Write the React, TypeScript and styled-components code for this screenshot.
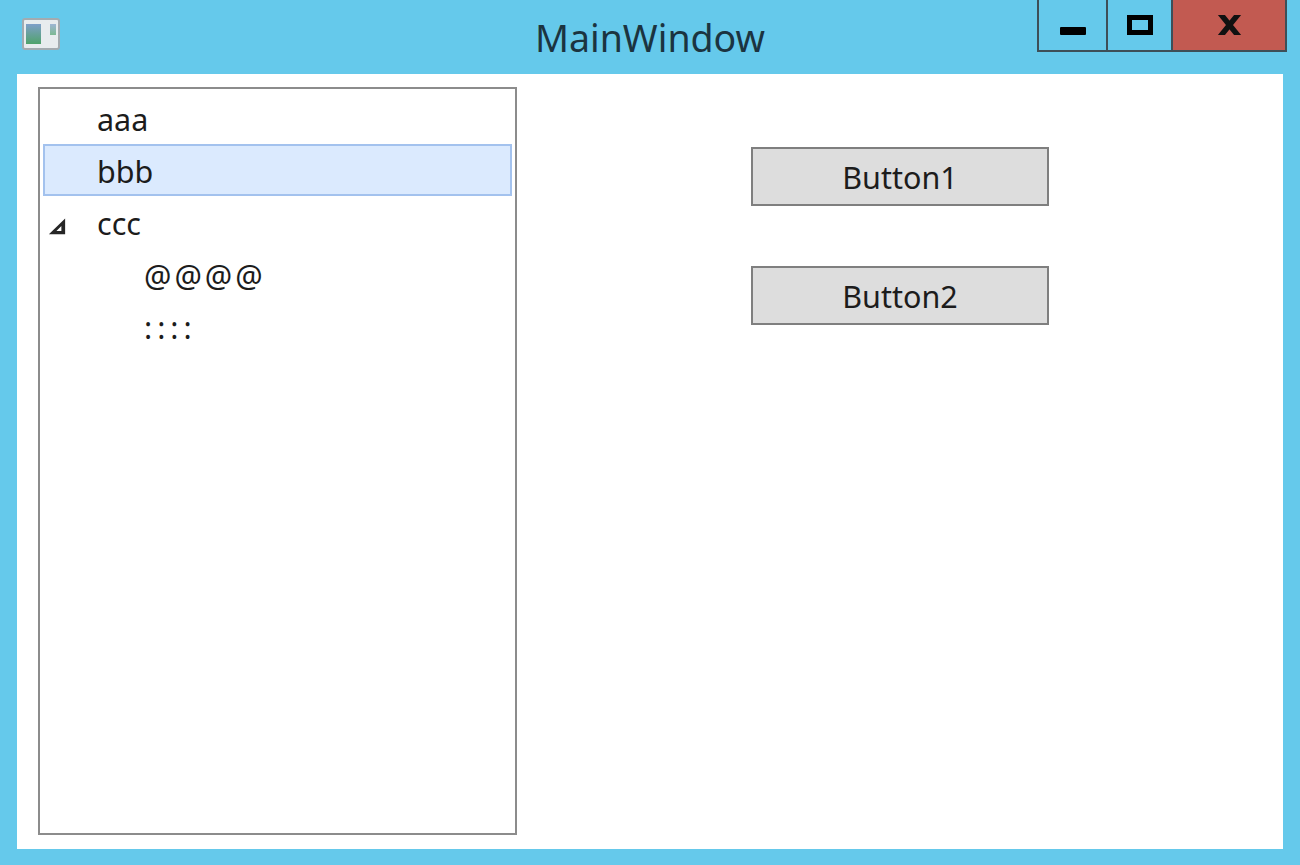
import styled, { createGlobalStyle } from 'styled-components';

const GlobalStyle = createGlobalStyle`
  html, body {
    margin: 0;
    padding: 0;
    height: 100%;
    background: #65c9eb;
  }
`;

const Frame = styled.div`
  width: 1300px;
  height: 865px;
  box-sizing: border-box;
  display: flex;
  flex-direction: column;
  padding: 0 17px 16px;
  background: #65c9eb;
  font-family: 'Noto Sans', 'Open Sans', sans-serif;
  color: #1c1c1c;
  overflow: hidden;
`;

const TitleBar = styled.div`
  height: 74px;
  flex-shrink: 0;
  display: grid;
  grid-template-columns: 1fr auto 1fr;
  align-items: start;
`;

const AppIcon = styled.svg`
  display: block;
  margin: 18px 0 0 5px;
`;

const Title = styled.div`
  font-size: 37.5px;
  line-height: 40px;
  margin-top: 18px;
  color: #1b3440;
`;

const CaptionButtons = styled.div`
  justify-self: end;
  display: flex;
  height: 52px;
  margin-right: -4px;
  box-sizing: border-box;
  border: solid #3d4f58;
  border-width: 0 2px 2px 2px;
`;

const CaptionButton = styled.div<{ $width: number; $close?: boolean }>`
  width: ${({ $width }) => $width}px;
  display: flex;
  align-items: center;
  justify-content: center;
  box-sizing: border-box;
  background: ${({ $close }) => ($close ? '#c25a51' : 'transparent')};
  & + & {
    border-left: 2px solid #3d4f58;
  }
`;

const Client = styled.div`
  flex: 1;
  display: flex;
  padding: 13px 0 14px 21px;
  background: #fff;
  min-height: 0;
`;

const Tree = styled.div`
  width: 479px;
  box-sizing: border-box;
  border: 2px solid #8c8c8c;
  padding: 3px;
  flex-shrink: 0;
  font-size: 30.5px;
`;

const Row = styled.div<{ $selected?: boolean; $level?: number; $spacing?: number }>`
  height: 52px;
  box-sizing: border-box;
  display: flex;
  align-items: center;
  padding: 2px 0 0 ${({ $level }) => 52 + ($level ?? 0) * 47}px;
  position: relative;
  letter-spacing: ${({ $spacing }) => $spacing ?? 0}px;
  border: 2px solid ${({ $selected }) => ($selected ? '#a3c2ee' : 'transparent')};
  background: ${({ $selected }) => ($selected ? '#dbeafe' : 'transparent')};
`;

const Expander = styled.svg`
  position: absolute;
  left: 2px;
  top: 18px;
`;

const ButtonPane = styled.div`
  flex: 1;
  display: flex;
  flex-direction: column;
  align-items: center;
  gap: 60px;
  padding-top: 60px;
`;

const PushButton = styled.div`
  width: 298px;
  height: 59px;
  box-sizing: border-box;
  border: 2px solid #7f7f7f;
  background: #dddddd;
  display: flex;
  align-items: center;
  justify-content: center;
  font-size: 30.5px;
`;

export default function App() {
  return (
    <Frame>
      <GlobalStyle />
      <TitleBar>
        <AppIcon width="38" height="32" viewBox="0 0 38 32">
          <defs>
            <linearGradient id="pane" x1="0" y1="0" x2="0" y2="1">
              <stop offset="0" stopColor="#7f9fc9" />
              <stop offset="1" stopColor="#4fa36b" />
            </linearGradient>
          </defs>
          <rect x="1" y="1" width="36" height="30" rx="2" fill="#e8ecee" stroke="#a3abb0" strokeWidth="2" />
          <rect x="4" y="6" width="15" height="20" fill="url(#pane)" />
          <rect x="28" y="6" width="6" height="11" fill="url(#pane)" opacity="0.7" />
        </AppIcon>
        <Title>MainWindow</Title>
        <CaptionButtons>
          <CaptionButton $width={67}>
            <svg width="26" height="22" viewBox="0 0 26 22">
              <rect y="13" width="26" height="8" rx="1" fill="#000" />
            </svg>
          </CaptionButton>
          <CaptionButton $width={65}>
            <svg width="26" height="20" viewBox="0 0 26 20">
              <rect x="2.5" y="2.5" width="21" height="15" fill="none" stroke="#000" strokeWidth="5" />
            </svg>
          </CaptionButton>
          <CaptionButton $width={114} $close>
            <svg width="25" height="20" viewBox="0 0 25 20">
              <path d="M2 -3 L23 23 M23 -3 L2 23" stroke="#111" strokeWidth="5.5" fill="none" />
            </svg>
          </CaptionButton>
        </CaptionButtons>
      </TitleBar>
      <Client>
        <Tree>
          <Row>aaa</Row>
          <Row $selected>bbb</Row>
          <Row>
            <Expander width="20" height="20" viewBox="0 0 16 16">
              <path d="M14.5 2 V14.5 H1.5 Z M11.5 8 L7.5 12 H11.5 Z" fill="#262626" fillRule="evenodd" />
            </Expander>
            ccc
          </Row>
          <Row $level={1} $spacing={3}>@@@@</Row>
          <Row $level={1} $spacing={5}>::::</Row>
        </Tree>
        <ButtonPane>
          <PushButton>Button1</PushButton>
          <PushButton>Button2</PushButton>
        </ButtonPane>
      </Client>
    </Frame>
  );
}
